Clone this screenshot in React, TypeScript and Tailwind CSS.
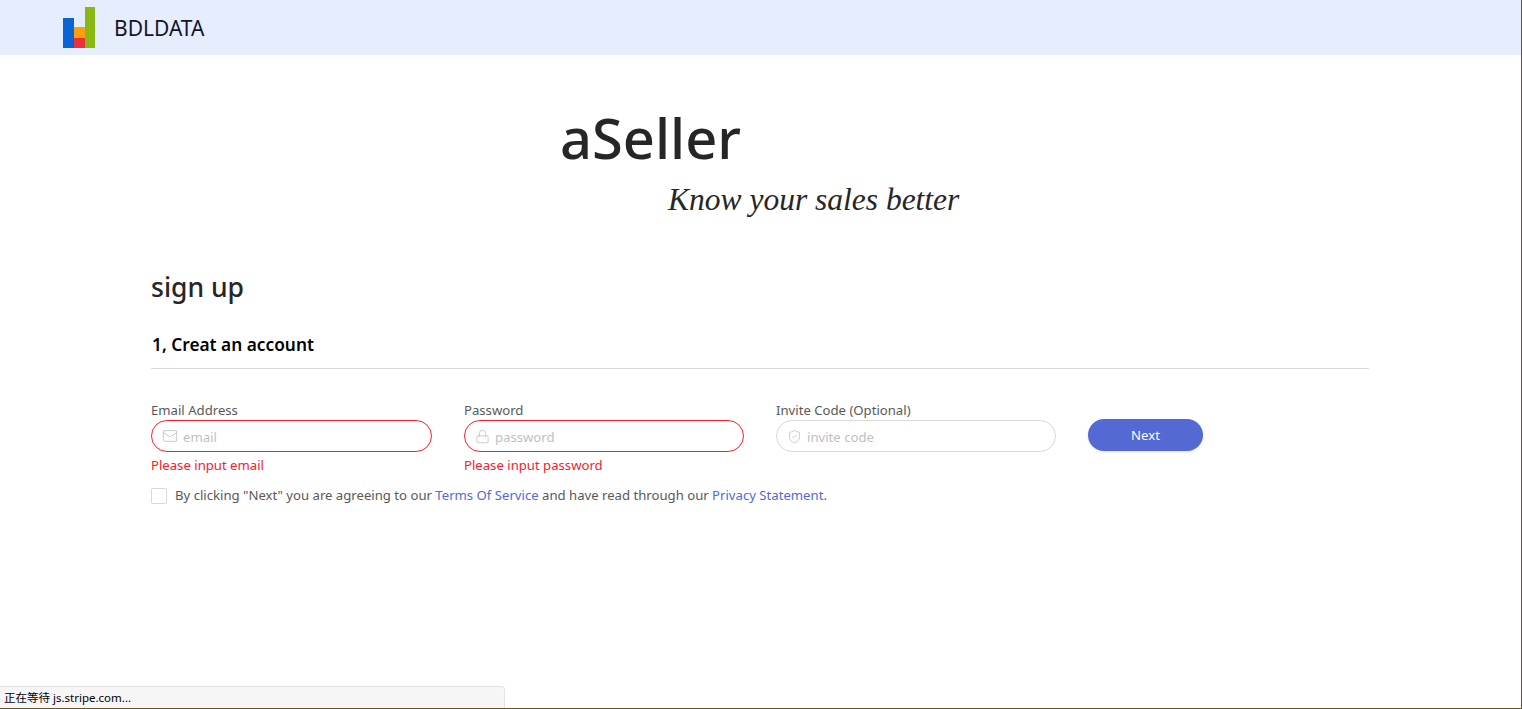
import { Lock, Mail, ShieldCheck } from "lucide-react";
import type { ReactNode } from "react";

const sans = "font-['Noto_Sans','Open_Sans',sans-serif]";

interface FieldProps {
  label: string;
  placeholder: string;
  icon: ReactNode;
  error?: string;
  width: string;
}

const Field = ({ label, placeholder, icon, error, width }: FieldProps) => {
  return (
    <div className={width}>
      <label className="block text-[13.15px] leading-[18px] text-[#595959]">{label}</label>
      <div
        className={`mt-[1px] flex h-[32px] items-center rounded-full border px-[10px] ${
          error ? "border-[#f5222d]" : "border-[#d9d9d9]"
        }`}
      >
        {icon}
        <span className="mt-[4px] ml-[5px] text-[13.15px] text-[#bfbfbf]">{placeholder}</span>
      </div>
      {error && <p className="mt-[4px] text-[13.15px] leading-[18px] text-[#f5222d]">{error}</p>}
    </div>
  );
};

const App = () => {
  return (
    <div className={`relative h-[709px] overflow-hidden border-r border-b border-[#6b5526] bg-white ${sans}`}>
      <header className="flex h-[55px] items-center bg-[#e6edfd] pl-[62px]">
        <svg width="35" height="42" viewBox="0 0 35 42" className="mt-[1px]">
          <rect x="1" y="11" width="11" height="30" fill="#0a63d3" />
          <rect x="12" y="20" width="11" height="11" fill="#fb9f0b" />
          <rect x="12" y="31" width="11" height="10" fill="#e8323c" />
          <rect x="23" y="0" width="10" height="41" fill="#8ab813" />
        </svg>
        <span className="mt-[2px] ml-[17px] text-[21px] text-[#14142a]">BDLDATA</span>
      </header>

      <div className="pl-[560px] pt-[42px]">
        <h1 className="text-[56px] leading-[80px] font-medium text-[#262626]">aSeller</h1>
        <p className="mt-[1px] pl-[108px] font-['Liberation_Serif',serif] text-[31.5px] leading-[44px] font-normal text-[#262626] italic">
          Know your sales better
        </p>
      </div>

      <main className="mt-[47px] mr-[152px] ml-[151px]">
        <h2 className="text-[26.5px] leading-[36px] font-medium text-[#262626]">sign up</h2>
        <h3 className="mt-[28px] border-b border-[#d9d9d9] pb-[12px] pl-[1px] text-[17.3px] leading-[23px] font-semibold text-black">
          1, Creat an account
        </h3>

        <div className="mt-[32px] flex items-start gap-[32px]">
          <Field
            width="w-[281px]"
            label="Email Address"
            placeholder="email"
            error="Please input email"
            icon={<Mail size={16} strokeWidth={1.25} className="text-[#bfbfbf]" />}
          />
          <Field
            width="w-[280px]"
            label="Password"
            placeholder="password"
            error="Please input password"
            icon={<Lock size={15} strokeWidth={1.25} className="text-[#bfbfbf]" />}
          />
          <Field
            width="w-[280px]"
            label="Invite Code (Optional)"
            placeholder="invite code"
            icon={<ShieldCheck size={15} strokeWidth={1.25} className="text-[#bfbfbf]" />}
          />
          <button className="mt-[18px] h-[32px] w-[115px] rounded-full bg-[#5469d4] pt-[2px] text-[13.15px] text-white shadow-sm">
            Next
          </button>
        </div>

        <div className="mt-[12px] flex items-center text-[13.15px] text-[#595959]">
          <span className="h-[16px] w-[16px] rounded-[2px] border border-[#d9d9d9] bg-white" />
          <span className="ml-[8px]">
            By clicking "Next" you are agreeing to our <a className="text-[#5469d4]">Terms Of Service</a> and have read
            through our <a className="text-[#5469d4]">Privacy Statement</a>.
          </span>
        </div>
      </main>

      {/* browser status bubble */}
      <div className="absolute bottom-0 left-0 flex h-[22px] w-[505px] items-center rounded-tr-[4px] border-t border-r border-[#e3e3e3] bg-[#f6f6f6] pl-[4px] font-['Noto_Sans','Noto_Sans_CJK_SC',sans-serif] text-[11.5px] text-black">
        正在等待 js.stripe.com...
      </div>
    </div>
  );
};

export default App;
